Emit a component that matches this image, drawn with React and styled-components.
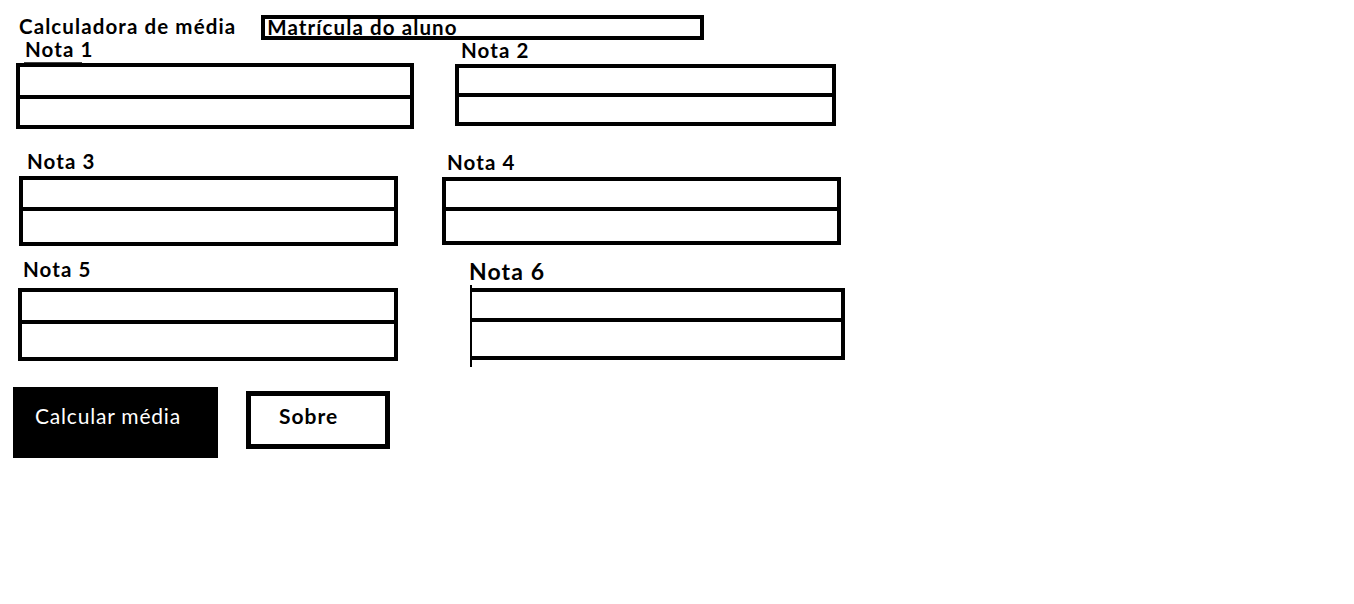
import styled, { createGlobalStyle } from "styled-components";

const Global = createGlobalStyle`
  html, body {
    margin: 0;
    padding: 0;
    background: #fff;
  }
  body {
    font-family: Lato, "Liberation Sans", sans-serif;
    color: #000;
  }
`;

const Page = styled.div`
  width: 1354px;
  height: 604px;
  display: flex;
  flex-direction: column;
  align-items: flex-start;
`;

const Header = styled.header`
  display: flex;
  align-items: flex-start;
  padding-top: 15px;
`;

const Title = styled.h1`
  margin: 0 0 0 19px;
  padding-top: 1px;
  font-size: 20.5px;
  line-height: 20px;
  letter-spacing: 1.1px;
  font-weight: 700;
  white-space: nowrap;
`;

const EnrollBox = styled.div`
  margin-left: 25px;
  width: 443px;
  height: 25px;
  box-sizing: border-box;
  border: 4px solid #000;
  padding: 0 0 0 2px;
  font-size: 20.5px;
  line-height: 17px;
  letter-spacing: 1.1px;
  font-weight: 700;
  white-space: nowrap;
  overflow: visible;
`;

const Row = styled.div`
  display: flex;
  align-items: flex-start;
  margin-top: ${(p) => p.$gap}px;
`;

const Field = styled.div`
  display: flex;
  flex-direction: column;
  align-items: flex-start;
  margin-left: ${(p) => p.$x}px;
  margin-top: ${(p) => p.$y}px;
  width: ${(p) => p.$w}px;
`;

const Label = styled.label`
  position: relative;
  margin-left: ${(p) => p.$lx}px;
  font-size: ${(p) => p.$size}px;
  line-height: ${(p) => p.$size}px;
  letter-spacing: 1.1px;
  font-weight: 700;
  white-space: nowrap;

  &::after {
    content: "";
    display: ${(p) => (p.$underline ? "block" : "none")};
    position: absolute;
    left: -1px;
    top: 23px;
    width: 58px;
    height: 1px;
    background: #444;
  }
`;

const Box = styled.div`
  position: relative;
  margin-top: ${(p) => p.$gap}px;
  width: 100%;
  height: ${(p) => p.$h}px;
  box-sizing: border-box;
  border: 4px solid #000;
  border-left-width: ${(p) => (p.$thinLeft ? 2 : 4)}px;
  display: flex;
  flex-direction: column;

  &::before {
    content: "";
    display: ${(p) => (p.$thinLeft ? "block" : "none")};
    position: absolute;
    left: -2px;
    top: -7px;
    bottom: -11px;
    width: 2px;
    background: #000;
  }
`;

const Slot = styled.div`
  height: ${(p) => p.$h}px;
  border-bottom: 4px solid #000;
  flex: none;
`;

const Actions = styled.div`
  display: flex;
  align-items: flex-start;
  margin-top: 26px;
`;

const PrimaryButton = styled.button`
  margin-left: 13px;
  width: 205px;
  height: 71px;
  border: 0;
  background: #000;
  color: #fff;
  font-family: Lato, "Liberation Sans", sans-serif;
  font-size: 21px;
  line-height: 21px;
  letter-spacing: 0.8px;
  font-weight: 400;
  text-align: left;
  padding: 18px 0 0 22px;
  display: flex;
  align-items: flex-start;
  box-sizing: border-box;
`;

const OutlineButton = styled.button`
  margin-left: 28px;
  margin-top: 4px;
  width: 144px;
  height: 58px;
  box-sizing: border-box;
  border: 5px solid #000;
  background: #fff;
  color: #000;
  font-family: Lato, "Liberation Sans", sans-serif;
  font-size: 21px;
  line-height: 21px;
  letter-spacing: 1px;
  font-weight: 700;
  text-align: left;
  padding: 9px 0 0 28px;
  display: flex;
  align-items: flex-start;
`;

// x is the gap from the previous field's right edge (or page edge)
const ROWS = [
  {
    gap: -1,
    fields: [
      { name: "Nota 1", x: 16, y: 0, w: 398, h: 66, lx: 9, gap: 3.5, top: 28, underline: true },
      { name: "Nota 2", x: 41, y: 1, w: 381, h: 62, lx: 6, gap: 3.5, top: 25 },
    ],
  },
  {
    gap: 22,
    fields: [
      { name: "Nota 3", x: 19, y: 0, w: 379, h: 70, lx: 8, gap: 4.5, top: 27 },
      { name: "Nota 4", x: 44, y: 1, w: 399, h: 68, lx: 5, gap: 4.5, top: 26 },
    ],
  },
  {
    gap: 13,
    fields: [
      { name: "Nota 5", x: 18, y: 0, w: 380, h: 73, lx: 5, gap: 8.5, top: 28 },
      { name: "Nota 6", x: 72, y: 1, w: 375, h: 72, lx: -1, gap: 5, top: 26, size: 23, thinLeft: true },
    ],
  },
];

export default function App() {
  return (
    <>
      <Global />
      <Page>
        <Header>
          <Title>Calculadora de média</Title>
          <EnrollBox>Matrícula do aluno</EnrollBox>
        </Header>

        {ROWS.map((row, ri) => (
          <Row key={ri} $gap={row.gap}>
            {row.fields.map((f) => (
              <Field key={f.name} $x={f.x} $y={f.y} $w={f.w}>
                <Label $lx={f.lx} $size={f.size || 20.5} $underline={f.underline}>
                  {f.name}
                </Label>
                <Box $gap={f.gap} $h={f.h} $thinLeft={f.thinLeft}>
                  <Slot $h={f.top} />
                </Box>
              </Field>
            ))}
          </Row>
        ))}

        <Actions>
          <PrimaryButton>Calcular média</PrimaryButton>
          <OutlineButton>Sobre</OutlineButton>
        </Actions>
      </Page>
    </>
  );
}
